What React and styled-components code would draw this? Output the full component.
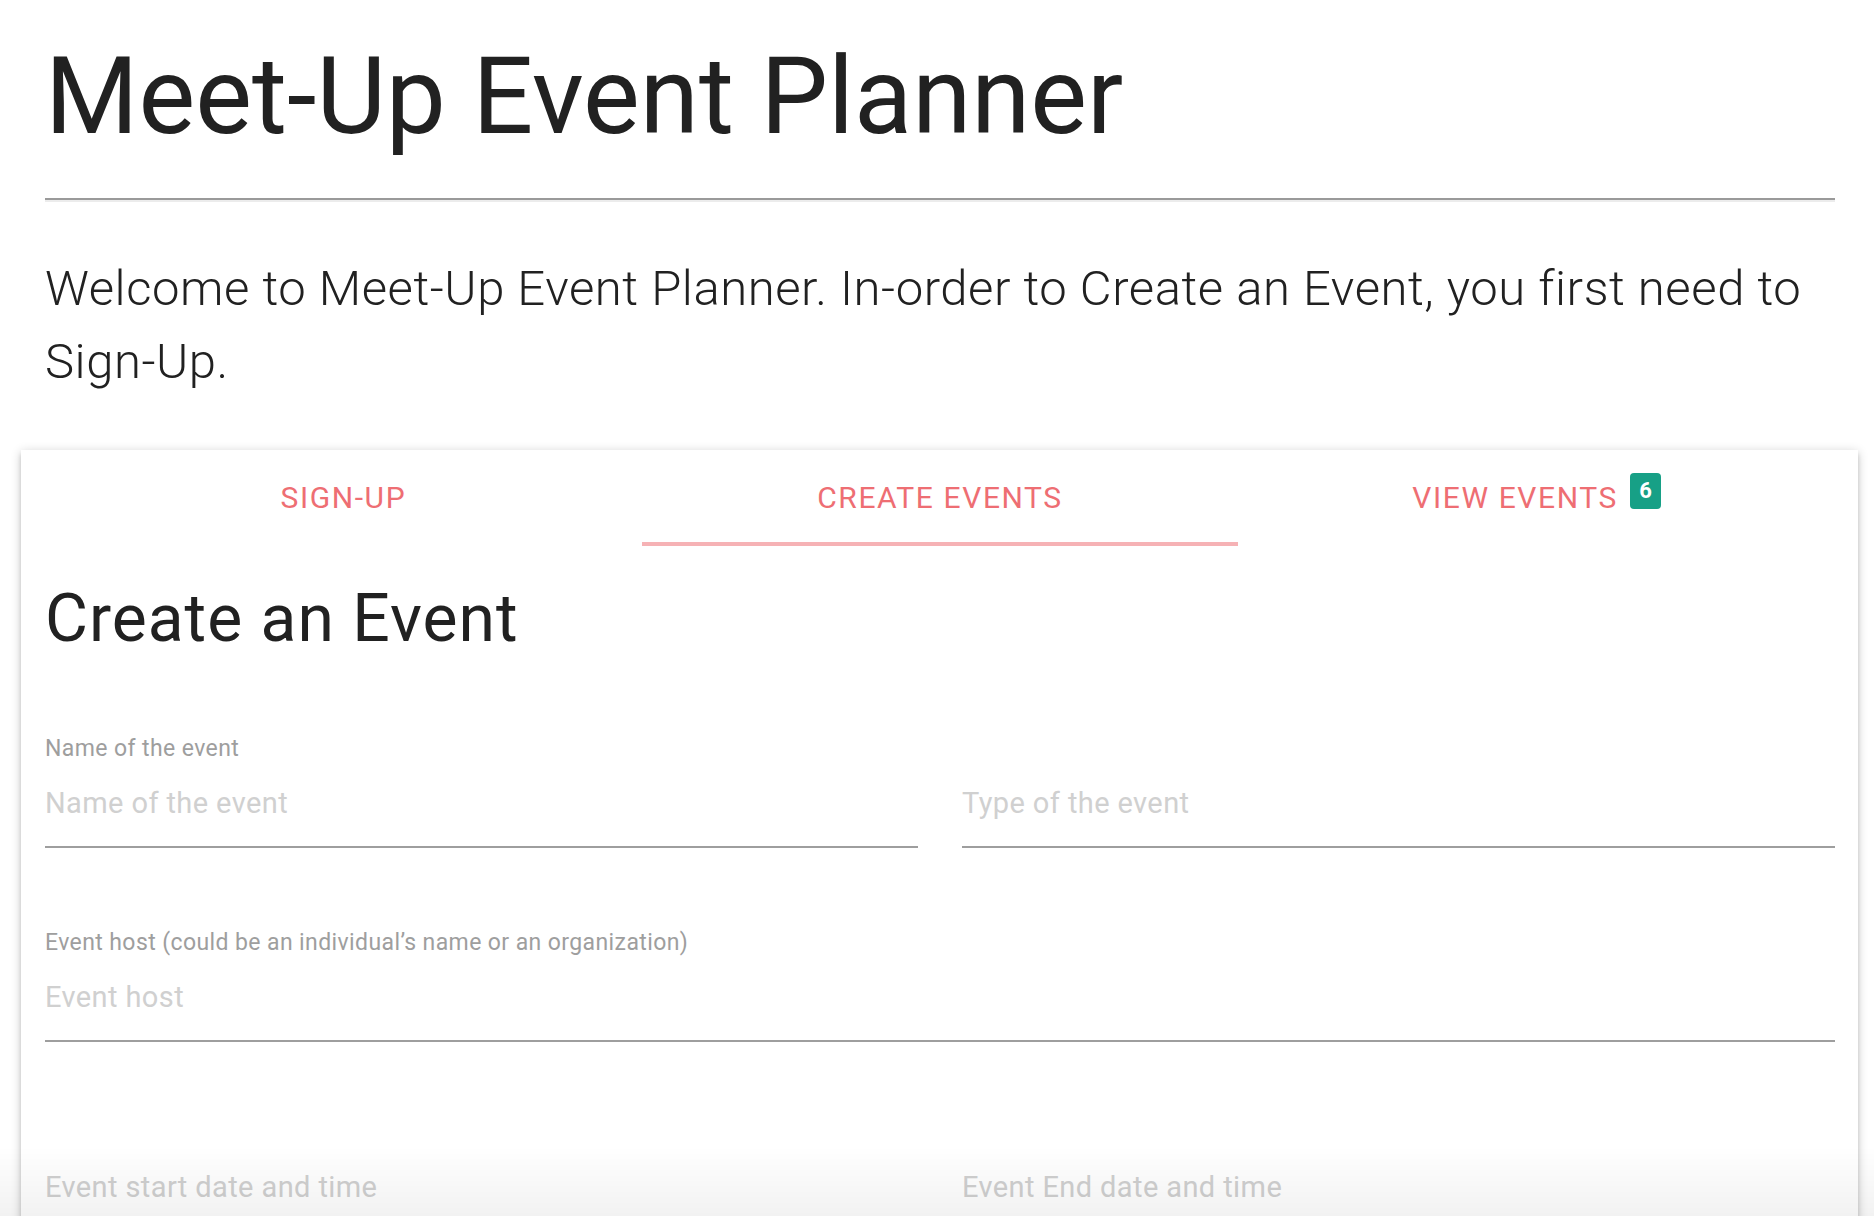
import React from "react";
import styled, { createGlobalStyle } from "styled-components";

const GlobalStyle = createGlobalStyle`
  html, body {
    margin: 0;
    padding: 0;
    background: #ffffff;
    font-family: Roboto, "Noto Sans", sans-serif;
    color: #212121;
  }
`;

const Page = styled.div`
  padding: 0 16px 0 21px;
`;

const Header = styled.header`
  padding: 0 23px 0 24px;
`;

const Title = styled.h1`
  margin: 38px 0 42px;
  font-size: 107px;
  line-height: 1.1;
  font-weight: 400;
  color: #212121;
`;

const Rule = styled.hr`
  margin: 0;
  height: 0;
  border: none;
  border-top: 2px solid #9a9a9a;
  border-bottom: 2px solid #ececec;
`;

const Intro = styled.p`
  margin: 50px 0 52px;
  font-size: 49px;
  line-height: 73px;
  font-weight: 300;
  letter-spacing: 0.55px;
  color: #212121;
`;

const Card = styled.section`
  background: #ffffff;
  padding: 0 23px 200px 24px;
  box-shadow: 0 4px 4px 0 rgba(0, 0, 0, 0.14), 0 6px 2px -4px rgba(0, 0, 0, 0.12),
    0 2px 10px 0 rgba(0, 0, 0, 0.2);
`;

const Tabs = styled.nav`
  display: grid;
  grid-template-columns: repeat(3, 1fr);
  height: 96px;
`;

const Tab = styled.a`
  display: flex;
  justify-content: center;
  align-items: flex-start;
  height: 96px;
  line-height: 96px;
  font-size: 30px;
  letter-spacing: 1.6px;
  color: #ee6e73;
  text-transform: uppercase;
  text-decoration: none;
  cursor: pointer;
  border-bottom: 4px solid ${(p) => (p.active ? "#f6b2b5" : "transparent")};
  box-sizing: border-box;
`;

const Badge = styled.span`
  display: inline-flex;
  align-items: center;
  justify-content: center;
  width: 31px;
  height: 36px;
  margin: 23px 0 0 12px;
  border-radius: 4px;
  background: #17a086;
  color: #ffffff;
  font-size: 22px;
  font-weight: 700;
  letter-spacing: 0;
  line-height: 36px;
`;

const Heading = styled.h3`
  margin: 37px 0 80px;
  font-size: 66px;
  line-height: 1.1;
  font-weight: 400;
  letter-spacing: 1px;
  color: #212121;
`;

const FormRow = styled.div`
  display: grid;
  grid-template-columns: ${(p) => (p.single ? "1fr" : "1fr 1fr")};
  column-gap: 44px;
  margin-bottom: ${(p) => (p.tight ? 77 : 81)}px;
`;

const Field = styled.div`
  display: flex;
  flex-direction: column;
`;

const Label = styled.label`
  height: 28px;
  font-size: 23px;
  line-height: 28px;
  letter-spacing: 0.4px;
  color: #9e9e9e;
  margin-bottom: 20px;
`;

const Input = styled.input`
  font-family: Roboto, "Noto Sans", sans-serif;
  font-size: 29px;
  line-height: 40px;
  letter-spacing: 0.4px;
  height: 40px;
  padding: 0 0 23px;
  margin: 0;
  border: none;
  border-bottom: 2px solid #9e9e9e;
  outline: none;
  background: transparent;
  color: #212121;
  box-sizing: content-box;

  &::placeholder {
    color: #d0d0d0;
  }
`;

const Fade = styled.div`
  position: fixed;
  left: 0;
  right: 0;
  bottom: 0;
  height: 70px;
  pointer-events: none;
  background: linear-gradient(rgba(0, 0, 0, 0), rgba(0, 0, 0, 0.05));
`;

const rows = [
  [
    { label: "Name of the event", placeholder: "Name of the event" },
    { label: "", placeholder: "Type of the event" },
  ],
  [
    {
      label: "Event host (could be an individual’s name or an organization)",
      placeholder: "Event host",
    },
  ],
  [
    { label: "", placeholder: "Event start date and time" },
    { label: "", placeholder: "Event End date and time" },
  ],
];

export default function App() {
  return (
    <>
      <GlobalStyle />
      <Page>
        <Header>
          <Title>Meet-Up Event Planner</Title>
          <Rule />
          <Intro>
            Welcome to Meet-Up Event Planner. In-order to Create an Event, you first need to
            Sign-Up.
          </Intro>
        </Header>
        <Card>
          <Tabs>
            <Tab>Sign-Up</Tab>
            <Tab active>Create Events</Tab>
            <Tab>
              View Events
              <Badge>6</Badge>
            </Tab>
          </Tabs>
          <Heading>Create an Event</Heading>
          {rows.map((row, i) => (
            <FormRow key={i} single={row.length === 1} tight={i === 1}>
              {row.map((f) => (
                <Field key={f.placeholder}>
                  <Label>{f.label}</Label>
                  <Input placeholder={f.placeholder} />
                </Field>
              ))}
            </FormRow>
          ))}
        </Card>
      </Page>
      <Fade />
    </>
  );
}
